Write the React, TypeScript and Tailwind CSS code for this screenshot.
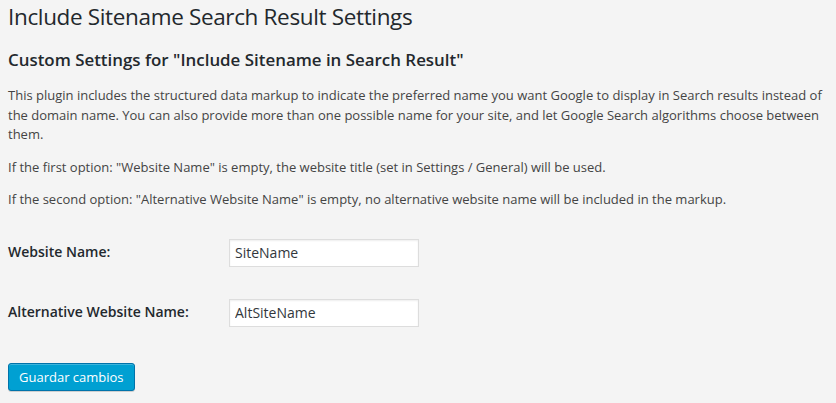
import React from "react";

export default function App() {
  return (
    <div
      className="min-h-[403px] w-full bg-[#f4f4f4] px-2 pt-[2px] text-[13px] text-[#444]"
      style={{ fontFamily: '"Open Sans", sans-serif' }}
    >
      <h1 className="pb-1 text-[22.5px] font-normal leading-[29px] tracking-[-0.35px] text-[#23282d]">
        Include Sitename Search Result Settings
      </h1>
      <h2 className="mt-4 text-[16.9px] font-semibold leading-[18.2px] text-[#23282d]">
        Custom Settings for "Include Sitename in Search Result"
      </h2>
      <p className="mt-[17px] leading-[19.5px]">
        This plugin includes the structured data markup to indicate the preferred name you want
        Google to display in Search results instead of the domain name. You can also provide more
        than one possible name for your site, and let Google Search algorithms choose between them.
      </p>
      <p className="mt-[13px] leading-[19.5px]">
        If the first option: "Website Name" is empty, the website title (set in Settings / General)
        will be used.
      </p>
      <p className="mt-[13px] leading-[19.5px]">
        If the second option: "Alternative Website Name" is empty, no alternative website name will
        be included in the markup.
      </p>
      <form className="mt-[13px]" onSubmit={(e) => e.preventDefault()}>
        <div className="flex">
          <label className="w-[210px] shrink-0 pb-5 pr-[10px] pt-5 text-[14px] font-semibold leading-[18.2px] text-[#23282d]">
            Website Name:
          </label>
          <div className="px-[10px] py-[15px]">
            <input
              type="text"
              defaultValue="SiteName"
              className="m-[1px] h-[28px] w-[190px] border border-[#ddd] bg-white px-[5px] text-[14px] text-[#32373c] shadow-[inset_0_1px_2px_rgba(0,0,0,0.07)] outline-none"
            />
          </div>
        </div>
        <div className="flex">
          <label className="w-[210px] shrink-0 pb-5 pr-[10px] pt-5 text-[14px] font-semibold leading-[18.2px] text-[#23282d]">
            Alternative Website Name:
          </label>
          <div className="px-[10px] py-[15px]">
            <input
              type="text"
              defaultValue="AltSiteName"
              className="m-[1px] h-[28px] w-[190px] border border-[#ddd] bg-white px-[5px] text-[14px] text-[#32373c] shadow-[inset_0_1px_2px_rgba(0,0,0,0.07)] outline-none"
            />
          </div>
        </div>
        <div className="mt-5">
          <button
            type="submit"
            className="h-[28px] rounded-[3px] border border-[#0073aa] bg-[#00a0d2] px-[10px] pb-[1px] text-[13px] leading-[26px] text-white shadow-[inset_0_1px_0_rgba(120,200,230,0.5),0_1px_0_rgba(0,0,0,0.15)]"
          >
            Guardar cambios
          </button>
        </div>
      </form>
    </div>
  );
}
